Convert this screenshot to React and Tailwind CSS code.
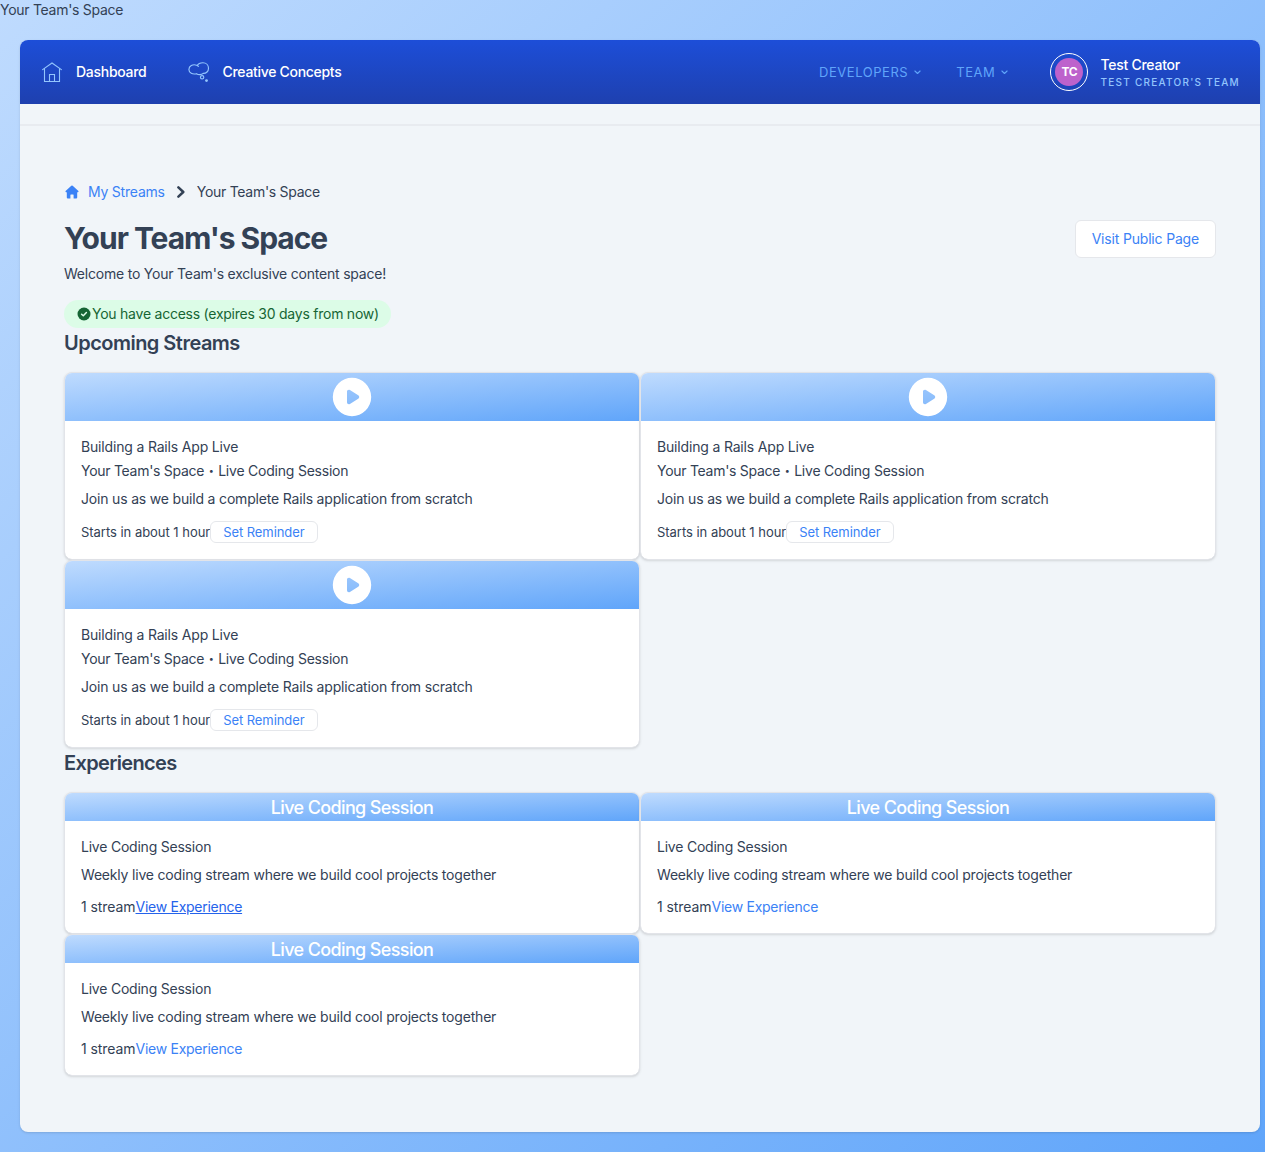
function HouseOutline() {
  return (
    <svg width="20" height="21" viewBox="0 0 20 21" fill="none" stroke="#93c5fd" strokeWidth="1.1" strokeLinecap="round" className="shrink-0">
      <path d="M0.6 7.6 L10 1 L19.4 7.6 M2.5 6.5 V19.5 H17.5 V6.5 M7.5 19.5 V12.5 H12.5 V19.5" />
    </svg>
  );
}

function ThoughtBubble() {
  return (
    <svg width="22" height="21" viewBox="0 0 22 21" fill="none" stroke="#93c5fd" strokeWidth="1.15" strokeLinecap="round" className="shrink-0">
      <path d="M10.4 4.4 C9.9 3.9 9.3 3.5 8.6 3.2 C4.7 1.9 0.9 4 0.9 7.5 C0.9 11 4.6 12.8 8.5 11.7 C10.4 13.1 13.5 13 15.2 11.4 C18.3 11.5 20.5 9.3 20.5 6.2 C20.5 3.1 18.2 0.7 14.9 0.7 C11.9 0.7 10 2 9.3 3.6" />
      <circle cx="14.1" cy="15.3" r="1.7" />
      <circle cx="18.5" cy="18.6" r="1.4" fill="#93c5fd" stroke="none" />
    </svg>
  );
}

function SmallChevron() {
  return (
    <svg width="7" height="5" viewBox="0 0 7 5" fill="none" stroke="#60a5fa" strokeWidth="1.1" strokeLinecap="round" strokeLinejoin="round">
      <path d="M0.9 1 L3.5 3.5 L6.1 1" />
    </svg>
  );
}

function Navbar() {
  return (
    <header className="flex h-16 items-center rounded-t-lg bg-[linear-gradient(to_bottom,#1d4ed8,#1e40af)] pr-5 pl-[22px] text-white">
      <a className="flex items-center gap-[14px] font-medium tracking-[-0.28px]"><HouseOutline />Dashboard</a>
      <a className="ml-[41px] flex items-center gap-[13px] font-medium tracking-[-0.3px]"><ThoughtBubble />Creative Concepts</a>
      <div className="ml-auto flex items-center">
        <span className="flex items-center gap-[6px] text-[13px] tracking-[0.55px] text-[#60a5fa]">DEVELOPERS<SmallChevron /></span>
        <span className="ml-[35px] flex items-center gap-[6px] text-[13px] tracking-[0.55px] text-[#60a5fa]">TEAM<SmallChevron /></span>
        <div className="ml-[42px] flex size-[38px] items-center justify-center rounded-full border border-white">
          <div className="flex size-7 items-center justify-center rounded-full bg-[#bd62cc] text-xs font-bold tracking-[-0.5px]">TC</div>
        </div>
        <div className="ml-3 pt-0.5">
          <div className="leading-[18px] font-medium tracking-[-0.25px]">Test Creator</div>
          <div className="text-[10px] leading-4 font-medium tracking-[1.26px] text-[#93c5fd]">TEST CREATOR'S TEAM</div>
        </div>
      </div>
    </header>
  );
}

function Card({ header, children }) {
  return (
    <article className="overflow-hidden rounded-lg border border-[#e2e4e9] bg-white bg-clip-padding shadow-[0_1px_3px_0_rgb(0_0_0/0.1),0_1px_2px_-1px_rgb(0_0_0/0.1)]">
      <div className="flex items-center justify-center bg-[linear-gradient(to_bottom_right,#bfdbfe,#60a5fa)] text-white">{header}</div>
      <div className="p-4">{children}</div>
    </article>
  );
}

function StreamCard() {
  return (
    <Card
      header={
        <div className="flex h-12 items-center">
          <svg width="40" height="40" viewBox="0 0 40 40">
            <path fillRule="evenodd" fill="white" d="M20 0.8 a19.2 19.2 0 1 0 0 38.4 a19.2 19.2 0 1 0 0 -38.4 Z M17.9 13.1 C16.6 12.3 15 13.1 15 14.7 V25.3 C15 26.9 16.6 27.7 17.9 26.9 L26.2 21.8 C27.6 20.9 27.6 19.1 26.2 18.2 Z" />
          </svg>
        </div>
      }
    >
      <h3 className="tracking-[-0.17px]">Building a Rails App Live</h3>
      <p className="mt-1 flex items-center">
        <span className="tracking-[-0.28px]">Your Team's Space</span>
        <span className="w-[14px] text-center text-[9px] leading-5">•</span>
        <span className="tracking-[-0.22px]">Live Coding Session</span>
      </p>
      <p className="mt-2">Join us as we build a complete Rails application from scratch</p>
      <div className="mt-3 flex items-center text-[13px] tracking-[-0.03px]">
        <span>Starts in about 1 hour</span>
        <button className="h-[22px] rounded-md border border-[#e5e7eb] px-3 leading-5 tracking-[-0.07px] text-[#3b82f6]">Set Reminder</button>
      </div>
    </Card>
  );
}

function ExperienceCard({ active }) {
  return (
    <Card header={<span className="h-7 pt-px text-lg leading-7 font-medium tracking-[-0.63px]">Live Coding Session</span>}>
      <h3 className="tracking-[-0.22px]">Live Coding Session</h3>
      <p className="mt-2 tracking-[-0.19px]">Weekly live coding stream where we build cool projects together</p>
      <div className="mt-3 flex">
        <span className="tracking-[-0.07px]">1 stream</span>
        <a className={active ? "tracking-[-0.27px] text-[#2563eb] underline" : "tracking-[-0.27px] text-[#3b82f6]"}>View Experience</a>
      </div>
    </Card>
  );
}

export default function App() {
  return (
    <div className="h-[1152px] bg-[linear-gradient(to_bottom_right,#bfdbfe,#60a5fa)] font-['Inter',sans-serif] text-sm tracking-[-0.18px] text-[#334155]">
      <p className="tracking-[-0.28px]">Your Team's Space</p>
      <div className="mt-5 mr-[5px] ml-5 h-[1092px] rounded-lg bg-[#f1f5f9] shadow-[0_1px_3px_0_rgb(0_0_0/0.1),0_1px_2px_-1px_rgb(0_0_0/0.1)]">
        <Navbar />
        <div className="h-[22px] border-b-2 border-[#e8ebf0]" />
        <main className="px-11 pt-14">
          <nav className="flex h-5 items-center">
            <svg width="16" height="16" viewBox="0 0 16 16" fill="#3b82f6">
              <path d="M7.3 1.8 Q8 1.2 8.7 1.8 L14.4 7 Q14.9 7.8 14 8.2 H13.2 V13.4 Q13.2 14.4 12.2 14.4 H9.6 V11.1 Q9.6 10.6 9.1 10.6 H6.9 Q6.4 10.6 6.4 11.1 V14.4 H3.8 Q2.8 14.4 2.8 13.4 V8.2 H2 Q1.1 7.8 1.6 7 Z" />
            </svg>
            <a className="ml-2 tracking-[-0.22px] text-[#3b82f6]">My Streams</a>
            <svg width="8" height="12" viewBox="0 0 8 12" fill="none" stroke="#334155" strokeWidth="2.5" strokeLinecap="round" strokeLinejoin="round" className="ml-3">
              <path d="M1.4 1.4 L6.3 6 L1.4 10.6" />
            </svg>
            <span className="ml-3 tracking-[-0.28px]">Your Team's Space</span>
          </nav>
          <div className="mt-[18px] flex items-center justify-between">
            <h1 className="pb-0.5 text-[30px] leading-9 font-bold tracking-[-1.03px]">Your Team's Space</h1>
            <button className="h-[38px] rounded-md border border-[#e5e7eb] bg-white px-4 text-[#3b82f6]">Visit Public Page</button>
          </div>
          <p className="mt-[6px] tracking-[-0.21px]">Welcome to Your Team's exclusive content space!</p>
          <div className="mt-4 flex h-7 w-fit items-center rounded-full bg-[#dcfce7] px-3 tracking-[-0.24px] text-[#166534]">
            <svg width="16" height="16" viewBox="0 0 16 16" fill="none">
              <circle cx="8" cy="8" r="6.5" fill="#166534" />
              <path d="M5.6 8.2 L7.3 9.8 L10.4 6.6" stroke="#dcfce7" strokeWidth="1.5" strokeLinecap="round" strokeLinejoin="round" />
            </svg>
            You have access (expires 30 days from now)
          </div>
          <h2 className="h-7 pt-px text-xl leading-7 font-semibold tracking-[-0.52px]">Upcoming Streams</h2>
          <section className="mt-4 grid grid-cols-2">
            <StreamCard />
            <StreamCard />
            <StreamCard />
          </section>
          <h2 className="h-7 pt-px text-xl leading-7 font-semibold tracking-[-0.64px]">Experiences</h2>
          <section className="mt-4 grid grid-cols-2">
            <ExperienceCard active />
            <ExperienceCard />
            <ExperienceCard />
          </section>
        </main>
      </div>
    </div>
  );
}
